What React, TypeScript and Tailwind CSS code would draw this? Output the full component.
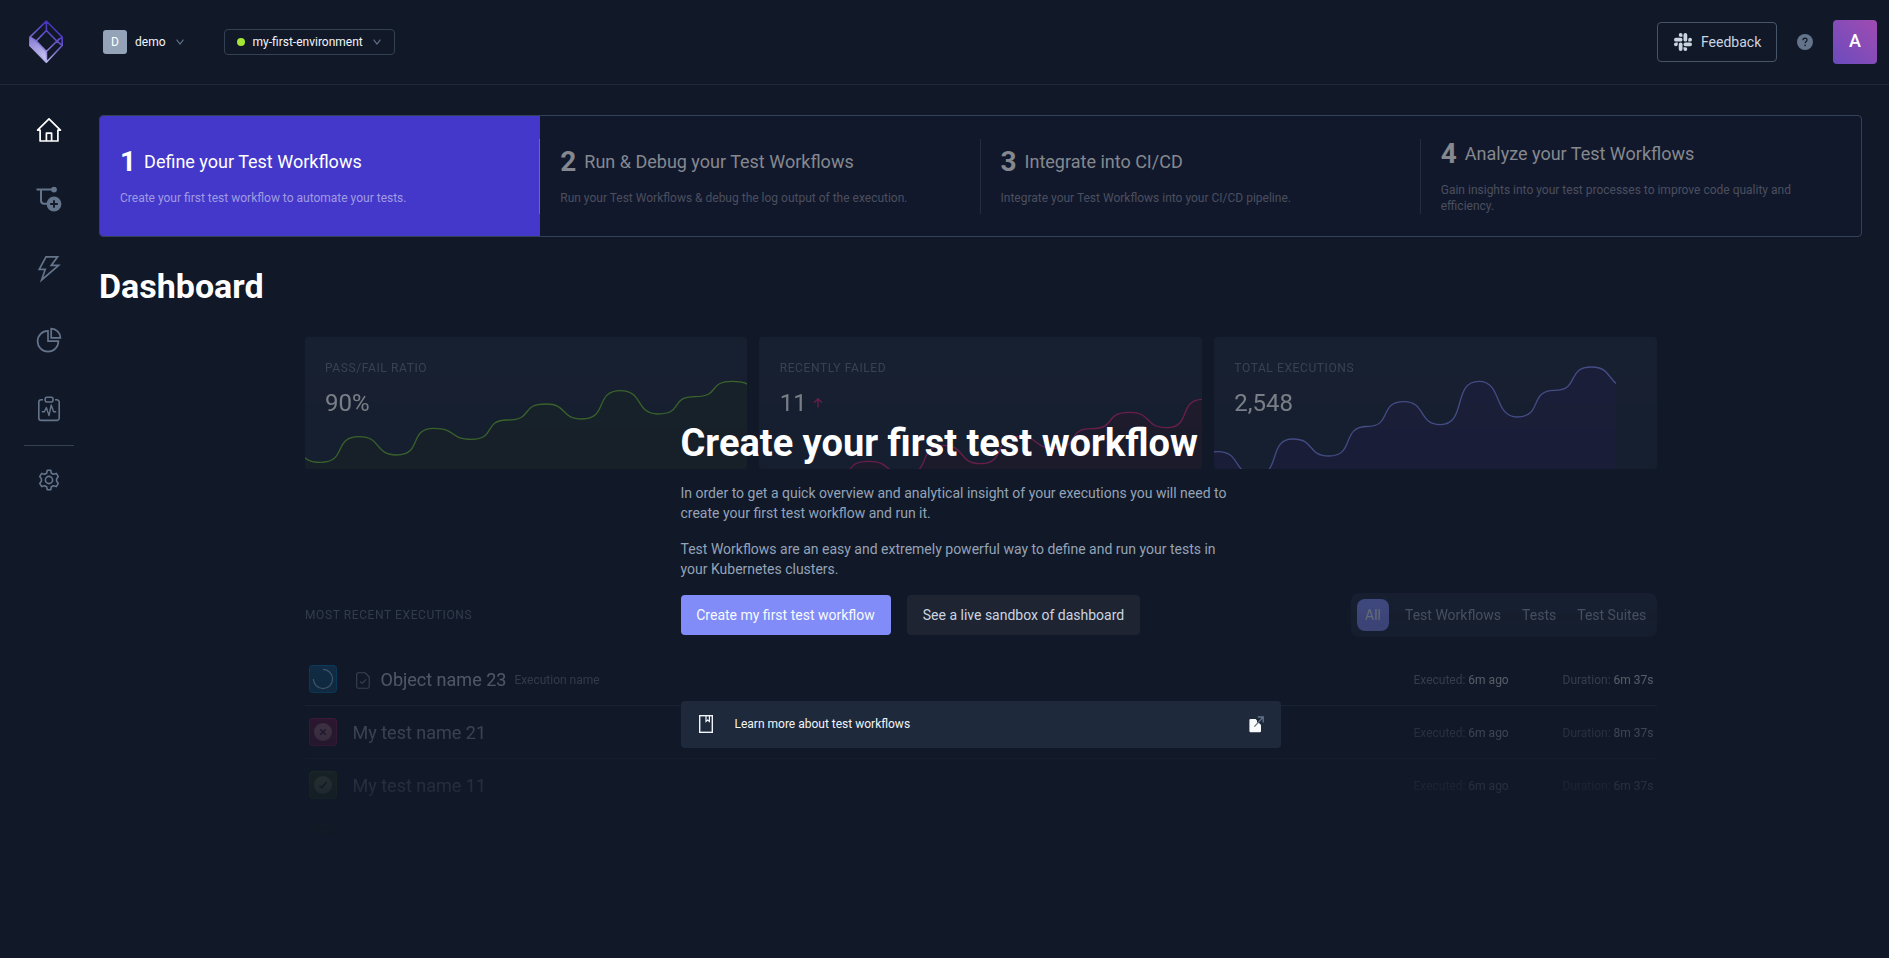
import React from "react";

type Point = [number, number];

/** Builds a wavy line in which every point is flat and neighbours join in an S, steeper on the way up. */
function wave(points: Point[]): string {
  let d = `M${points[0][0]} ${points[0][1]}`;
  for (let i = 1; i < points.length; i++) {
    const [x0, y0] = points[i - 1];
    const [x1, y1] = points[i];
    const h = (x1 - x0) * (y1 < y0 ? 0.7 : 0.61);
    d += ` C${x0 + h} ${y0} ${x1 - h} ${y1} ${x1} ${y1}`;
  }
  return d;
}

function Logo() {
  return (
    <svg width="36" height="44" viewBox="0 0 36 44" fill="none">
      <defs>
        <linearGradient id="logo-line" x1="8" y1="40" x2="26" y2="10" gradientUnits="userSpaceOnUse">
          <stop stopColor="#c4c2ee" />
          <stop offset="0.5" stopColor="#7c6bd0" />
          <stop offset="1" stopColor="#4a35c0" />
        </linearGradient>
        <linearGradient id="logo-face" x1="5" y1="20" x2="14" y2="40" gradientUnits="userSpaceOnUse">
          <stop stopColor="#8f86d8" />
          <stop offset="1" stopColor="#c9c7ef" />
        </linearGradient>
      </defs>
      <path d="M0.6 17 L7.5 21 L17.5 31.5 V43 L0.6 26 Z" fill="url(#logo-face)" />
      <path
        d="M17.4 1.2 L33.2 17 V25.5 L17.4 42.2 L1 25.5 V17 Z M17.4 1.2 V10.5 L7.2 21 L17.4 31.5 L30.5 18.5 M33.2 25.5 L28 21.2 L17.4 10.5 M28 21.2 L33.2 17 M1 17 L7.2 21 M17.4 31.5 V42"
        stroke="url(#logo-line)"
        strokeWidth="1.6"
        strokeLinejoin="round"
      />
    </svg>
  );
}

function Chevron() {
  return (
    <svg width="8" height="6" viewBox="0 0 8 6" fill="none" stroke="#64748b" strokeWidth="1.1">
      <path d="M0.6 0.6 L4 5 L7.4 0.6" />
    </svg>
  );
}

function SlackIcon() {
  return (
    <svg width="18" height="18" viewBox="0 0 24 24" fill="#cbd5e1">
      <path d="M5.042 15.165a2.528 2.528 0 0 1-2.52 2.523A2.528 2.528 0 0 1 0 15.165a2.527 2.527 0 0 1 2.522-2.52h2.52v2.52zM6.313 15.165a2.527 2.527 0 0 1 2.521-2.52 2.527 2.527 0 0 1 2.521 2.52v6.313A2.528 2.528 0 0 1 8.834 24a2.528 2.528 0 0 1-2.521-2.522v-6.313zM8.834 5.042a2.528 2.528 0 0 1-2.521-2.52A2.528 2.528 0 0 1 8.834 0a2.528 2.528 0 0 1 2.521 2.522v2.52H8.834zM8.834 6.313a2.528 2.528 0 0 1 2.521 2.521 2.528 2.528 0 0 1-2.521 2.521H2.522A2.528 2.528 0 0 1 0 8.834a2.528 2.528 0 0 1 2.522-2.521h6.312zM18.956 8.834a2.528 2.528 0 0 1 2.522-2.521A2.528 2.528 0 0 1 24 8.834a2.528 2.528 0 0 1-2.522 2.521h-2.522V8.834zM17.688 8.834a2.528 2.528 0 0 1-2.523 2.521 2.527 2.527 0 0 1-2.52-2.521V2.522A2.527 2.527 0 0 1 15.165 0a2.528 2.528 0 0 1 2.523 2.522v6.312zM15.165 18.956a2.528 2.528 0 0 1 2.523 2.522A2.528 2.528 0 0 1 15.165 24a2.527 2.527 0 0 1-2.52-2.522v-2.522h2.52zM15.165 17.688a2.527 2.527 0 0 1-2.52-2.523 2.526 2.526 0 0 1 2.52-2.52h6.313A2.527 2.527 0 0 1 24 15.165a2.528 2.528 0 0 1-2.522 2.523h-6.313z" />
    </svg>
  );
}

function HelpIcon() {
  return (
    <svg width="16" height="16" viewBox="0 0 16 16" fill="none">
      <circle cx="8" cy="8" r="8" fill="#64748b" />
      <path
        d="M5.9 6.3 C5.9 4.9 6.8 4.1 8 4.1 C9.2 4.1 10.1 4.9 10.1 6 C10.1 7.5 8.1 7.6 8.1 9.3"
        stroke="#111827"
        strokeWidth="1.2"
      />
      <circle cx="8.1" cy="11.4" r="0.8" fill="#111827" />
    </svg>
  );
}

function HomeIcon() {
  return (
    <svg width="26" height="26" viewBox="0 0 26 26" fill="none" stroke="#fff" strokeWidth="1.7" strokeLinejoin="round">
      <path d="M13 1.8 L1.6 13.2 H4.1 V24 H21.9 V13.2 H24.4 Z" />
      <path d="M10.4 24 V16.2 H15.6 V24" />
    </svg>
  );
}

function WorkflowIcon() {
  return (
    <svg width="26" height="26" viewBox="0 0 26 26" fill="none" stroke="#64748b" strokeWidth="2">
      <path d="M0.5 3.6 H18 M5 3.6 V14.4 C5 16.8 6 17.8 8.4 17.8 H12" />
      <circle cx="18" cy="3.6" r="2.9" fill="#64748b" stroke="none" />
      <circle cx="18" cy="18" r="7.4" fill="#64748b" stroke="none" />
      <path d="M18 14.2 V21.8 M14.2 18 H21.8" stroke="#111827" strokeWidth="1.9" />
    </svg>
  );
}

function BoltIcon() {
  return (
    <svg width="26" height="28" viewBox="0 0 26 28" fill="none" stroke="#64748b" strokeWidth="1.7" strokeLinejoin="miter">
      <path d="M10 1.8 H21.6 L15.2 10.4 H22.6 L5.6 25 L9.2 14.4 H3.2 Z" />
    </svg>
  );
}

function PieIcon() {
  return (
    <svg width="26" height="26" viewBox="0 0 26 26" fill="none" stroke="#64748b" strokeWidth="1.7">
      <path d="M12 3.8 A10.4 10.4 0 1 0 22.4 14.2 H12 Z" />
      <path d="M15.2 1.6 A9.4 9.4 0 0 1 24.4 10.8 H15.2 Z" />
    </svg>
  );
}

function ClipboardIcon() {
  return (
    <svg width="24" height="26" viewBox="0 0 24 26" fill="none" stroke="#64748b" strokeWidth="1.6" strokeLinejoin="round">
      <path d="M6 3.8 H4.2 A2.4 2.4 0 0 0 1.8 6.2 V22 A2.4 2.4 0 0 0 4.2 24.4 H19.8 A2.4 2.4 0 0 0 22.2 22 V6.2 A2.4 2.4 0 0 0 19.8 3.8 H18" />
      <rect x="8.2" y="1.2" width="7.8" height="4.8" rx="1.6" />
      <path d="M4.8 15.8 H7.4 L9.4 11.6 L12 19.6 L14.2 9 L16.6 15.8 H19.2" strokeWidth="1.4" />
    </svg>
  );
}

function GearIcon() {
  return (
    <svg width="24" height="24" viewBox="0 0 24 24" fill="none" stroke="#64748b" strokeWidth="1.6" strokeLinejoin="round">
      <path d="M10.3 2.2 H13.7 L14.4 5.2 L16.4 6.3 L19.3 5.4 L21.3 8.6 L19.6 10.8 V13.2 L21.3 15.4 L19.3 18.6 L16.4 17.7 L14.4 18.8 L13.7 21.8 H10.3 L9.6 18.8 L7.6 17.7 L4.7 18.6 L2.7 15.4 L4.4 13.2 V10.8 L2.7 8.6 L4.7 5.4 L7.6 6.3 L9.6 5.2 Z" />
      <circle cx="12" cy="12" r="3.6" />
    </svg>
  );
}

const steps = [
  { n: 1, title: "Define your Test Workflows", text: "Create your first test workflow to automate your tests." },
  { n: 2, title: "Run & Debug your Test Workflows", text: "Run your Test Workflows & debug the log output of the execution." },
  { n: 3, title: "Integrate into CI/CD", text: "Integrate your Test Workflows into your CI/CD pipeline." },
  { n: 4, title: "Analyze your Test Workflows", text: "Gain insights into your test processes to improve code quality and efficiency." },
];

interface Metric {
  label: string;
  value: string;
  rising?: boolean;
  stroke: string;
  fill: string;
  width: number;
  points: Point[];
}

const metrics: Metric[] = [
  {
    label: "PASS/FAIL RATIO",
    value: "90%",
    stroke: "#6abe30",
    fill: "#202c2d",
    width: 443,
    points: [[-22, 111], [15.7, 125.3], [54.3, 99.7], [91.7, 118], [129, 91.3], [166.7, 102.3], [202.5, 83], [241, 67], [277, 82], [315.7, 53.7], [353, 77], [390, 59.7], [427.7, 44.3], [466, 56]],
  },
  {
    label: "RECENTLY FAILED",
    value: "11",
    rising: true,
    stroke: "#db2777",
    fill: "#2c2034",
    width: 443,
    points: [[72, 140], [110, 124.3], [147, 137], [184, 108.3], [221.7, 126.7], [259.3, 99.7], [296, 111.3], [332, 91.7], [370.7, 75.3], [407.7, 90.7], [444, 62.3]],
  },
  {
    label: "TOTAL EXECUTIONS",
    value: "2,548",
    stroke: "#818cf8",
    fill: "#25254d",
    width: 402,
    points: [[-10, 115], [4, 114.7], [42, 138], [79, 102], [115, 119], [153, 89.5], [190, 64.7], [226.3, 87.7], [265, 44.3], [303, 80], [340.5, 53.3], [377.5, 30], [415, 50]],
  },
];

function MetricCard({ label, value, rising, stroke, fill, width, points }: Metric) {
  const line = wave(points);
  const lastX = points[points.length - 1][0];
  return (
    <div className="relative h-[132px] flex-1 overflow-hidden rounded bg-[#1e293b] px-5 pt-[23px]">
      <svg className="absolute top-0 left-0" width={width} height="132" fill="none">
        <path d={`${line} L${lastX} 180 L${points[0][0]} 180 Z`} fill={fill} />
        <path d={line} stroke={stroke} strokeWidth="1.3" />
      </svg>
      <div className="relative pl-[0.5px] text-xs leading-4 tracking-[0.6px] text-[#64748b]">{label}</div>
      <div className="relative mt-[15px] flex items-center gap-1.5 pl-[0.5px] text-2xl leading-6 text-[#f8fafc]">
        {value}
        {rising && (
          <svg width="10" height="10" viewBox="0 0 10 10" fill="none" stroke="#db2777" strokeWidth="1.2">
            <path d="M5 9.6 V1 M1 4.8 L5 0.9 L9 4.8" />
          </svg>
        )}
      </div>
    </div>
  );
}

function RunningBadge() {
  return (
    <svg width="28" height="28" viewBox="0 0 28 28" fill="none">
      <rect x="0.5" y="0.5" width="27" height="27" rx="3" fill="#0f5480" stroke="#0284c7" />
      <path d="M14 4.4 A9.6 9.6 0 1 1 4.4 14" stroke="#a5dcf7" strokeWidth="1.2" />
    </svg>
  );
}

function FailedBadge() {
  return (
    <svg width="28" height="28" viewBox="0 0 28 28" fill="none">
      <rect x="0.5" y="0.5" width="27" height="27" rx="3" fill="#85184f" stroke="#cf1f6c" />
      <circle cx="14" cy="14" r="9" fill="#e08aaa" />
      <path d="M11.2 11.2 L16.8 16.8 M16.8 11.2 L11.2 16.8" stroke="#4a1238" strokeWidth="1.4" />
    </svg>
  );
}

function PassedBadge() {
  return (
    <svg width="28" height="28" viewBox="0 0 28 28" fill="none">
      <rect x="0.5" y="0.5" width="27" height="27" rx="3" fill="#3f661c" stroke="#5c8f14" />
      <circle cx="14" cy="14" r="9" fill="#b4d47c" />
      <path d="M10.4 14.4 L13 16.8 L17.6 11" stroke="#14240f" strokeWidth="1.4" />
    </svg>
  );
}

function FileCheckIcon() {
  return (
    <svg width="14" height="17" viewBox="0 0 14 17" fill="none" stroke="#94a3b8" strokeWidth="1.1" strokeLinejoin="round">
      <path d="M2.5 0.7 H9 L13.2 5 V14.4 A1.8 1.8 0 0 1 11.4 16.2 H2.5 A1.8 1.8 0 0 1 0.7 14.4 V2.5 A1.8 1.8 0 0 1 2.5 0.7 Z" />
      <path d="M4 9.4 L6.2 11.4 L10 7.4" />
    </svg>
  );
}

const executions = [
  { badge: <RunningBadge />, name: "Object name 23", execution: "Execution name", duration: "6m 37s" },
  { badge: <FailedBadge />, name: "My test name 21", duration: "8m 37s" },
  { badge: <PassedBadge />, name: "My test name 11", duration: "6m 37s" },
];

function Preview() {
  return (
    <div className="h-[498px] w-[1352px] overflow-hidden [mask-image:linear-gradient(to_bottom,rgba(0,0,0,0.46)_0px,rgba(0,0,0,0.42)_260px,rgba(0,0,0,0.30)_345px,rgba(0,0,0,0.195)_397px,rgba(0,0,0,0.1)_449px,transparent_500px)]">
      <div className="flex gap-3">
        {metrics.map((m) => (
          <MetricCard key={m.label} {...m} />
        ))}
      </div>
      <div className="mt-[124px] flex h-11 items-center justify-between">
        <div className="pl-[0.5px] text-xs tracking-[0.6px] text-[#64748b]">MOST RECENT EXECUTIONS</div>
        <div className="flex h-11 w-[306px] items-center rounded-lg bg-[#1e293b] pl-1.5 text-sm text-[#94a3b8]">
          <span className="flex size-8 items-center justify-center rounded-lg bg-[#818cf8] pl-px text-[#e2e8f0]">All</span>
          <span className="ml-[16.5px]">Test Workflows</span>
          <span className="ml-[21px]">Tests</span>
          <span className="ml-[21px]">Test Suites</span>
        </div>
      </div>
      <div className="mt-[16px]">
        {executions.map((e) => (
          <div key={e.name} className="flex h-[53px] items-center border-b border-[#334155] pr-1 pl-1">
            {e.badge}
            <div className="ml-4 flex flex-1 items-center pt-0.5">
              {e.execution && (
                <span className="mr-[11px] ml-[3px]">
                  <FileCheckIcon />
                </span>
              )}
              <span className="text-lg text-[#e2e8f0]">{e.name}</span>
              {e.execution && <span className="ml-2 text-xs text-[#7c8ba3]">{e.execution}</span>}
            </div>
            <div className="w-[149px] pt-0.5 text-xs whitespace-nowrap text-[#8492a8]">
              Executed: <span className="text-[#f1f5f9]">6m ago</span>
            </div>
            <div className="w-[90px] pt-0.5 text-xs whitespace-nowrap text-[#8492a8]">
              Duration: <span className="text-[#f1f5f9]">{e.duration}</span>
            </div>
          </div>
        ))}
        <div className="flex h-[53px] items-center pl-1">
          <PassedBadge />
        </div>
      </div>
    </div>
  );
}

function Hero() {
  return (
    <div className="w-[600px]">
      <h2 className="text-[38px] leading-[48px] font-bold text-white">Create your first test workflow</h2>
      <p className="mt-4 w-[560px] text-sm leading-5 text-[#94a3b8]">
        In order to get a quick overview and analytical insight of your executions you will need to create your first
        test workflow and run it.
      </p>
      <p className="mt-4 w-[560px] text-sm leading-5 text-[#94a3b8]">
        Test Workflows are an easy and extremely powerful way to define and run your tests in your Kubernetes clusters.
      </p>
      <div className="mt-4 flex gap-4">
        <button className="h-10 w-[210px] rounded bg-[#818cf8] text-sm text-[#f8fafc]">Create my first test workflow</button>
        <button className="h-10 w-[233px] rounded bg-[#1e2431] pl-px text-sm text-[#cbd5e1]">See a live sandbox of dashboard</button>
      </div>
      <div className="mt-[66px] flex h-[47px] items-center rounded bg-[#1e293b] pr-[17px] pb-px pl-[18px]">
        <svg width="14" height="18" viewBox="0 0 14 18" fill="none" stroke="#f1f5f9" strokeWidth="1.4">
          <rect x="0.7" y="0.7" width="12.6" height="16.6" />
          <path d="M7 1 V6.4 L8.7 5 L10.4 6.4 V1" strokeWidth="1.2" />
        </svg>
        <span className="ml-[22px] flex-1 text-xs text-[#f1f5f9]">Learn more about test workflows</span>
        <svg width="16" height="17" viewBox="0 0 16 17" fill="none">
          <path d="M2.6 3 H7.6 L9 4.4 V6.6 L11.6 7.6 L13 9 V15 A1.2 1.2 0 0 1 11.8 16.2 H2.6 A1.2 1.2 0 0 1 1.4 15 V4.2 A1.2 1.2 0 0 1 2.6 3 Z" fill="#f8fafc" />
          <path d="M6.4 10.6 L14.6 1.6 M9.8 1 H15.2 V6.4" stroke="#64748b" strokeWidth="1.3" />
        </svg>
      </div>
    </div>
  );
}

export default function App() {
  return (
    <div className="flex h-[958px] w-[1889px] flex-col overflow-hidden bg-[#111827] font-['Roboto',sans-serif] text-white">
      <header className="flex h-[85px] shrink-0 items-center border-b border-[#1e293b] pr-3 pl-[29px]">
        <Logo />
        <div className="ml-[38px] flex items-center">
          <span className="flex size-6 items-center justify-center rounded-[3px] bg-[#94a3b8] text-xs">D</span>
          <span className="mr-[10px] ml-2 text-xs text-[#f1f5f9]">demo</span>
          <Chevron />
        </div>
        <div className="ml-10 flex h-[26px] w-[171px] items-center rounded border border-[#334155] pl-3">
          <span className="size-2 rounded-full bg-[#a3e635]" />
          <span className="mr-[10px] ml-2 text-xs text-[#f1f5f9]">my-first-environment</span>
          <Chevron />
        </div>
        <div className="ml-auto flex items-center">
          <button className="flex h-10 w-[120px] items-center rounded border border-[#475569] pl-4 text-sm text-[#cbd5e1]">
            <SlackIcon />
            <span className="ml-[9px]">Feedback</span>
          </button>
          <span className="ml-5">
            <HelpIcon />
          </span>
          <span className="ml-5 flex size-11 items-center justify-center rounded bg-linear-to-tr from-[#6a4bbd] to-[#a04ab2] pb-0.5 text-lg font-medium">
            A
          </span>
        </div>
      </header>
      <div className="flex min-h-0 flex-1">
        <nav className="flex w-[98px] shrink-0 flex-col items-center">
          <span className="mt-[32px]"><HomeIcon /></span>
          <span className="mt-[43px]"><WorkflowIcon /></span>
          <span className="mt-[43px]"><BoltIcon /></span>
          <span className="mt-[44px]"><PieIcon /></span>
          <span className="mt-[43px]"><ClipboardIcon /></span>
          <span className="mt-[23px] h-px w-[50px] bg-[#334155]" />
          <span className="mt-[22px]"><GearIcon /></span>
        </nav>
        <main className="ml-px flex w-[1763px] flex-col pt-[30px]">
          <section className="flex h-[122px] shrink-0 overflow-hidden rounded border border-[#334155] bg-[#12182b]">
            {steps.map((s) => (
              <div
                key={s.n}
                className={
                  s.n === 1
                    ? "flex flex-1 items-center bg-[#4338ca]"
                    : "flex flex-1 items-center"
                }
              >
                <div className="flex-1 px-5">
                  <div className={s.n === 1 ? "flex items-center text-white" : "flex items-center text-[#85888f]"}>
                    <span className="mr-2 text-[28px] leading-8 font-bold">{s.n}</span>
                    <span className="text-lg leading-8">{s.title}</span>
                  </div>
                  <p className={s.n === 1 ? "mt-3 text-xs leading-4 text-[#a19be4]" : "mt-3 text-xs leading-4 text-[#4a4f5f]"}>{s.text}</p>
                </div>
                {s.n < 4 && <span className={s.n === 1 ? "h-[75px] w-px bg-[#6a62d5]" : "h-[75px] w-px bg-[#272c3c]"} />}
              </div>
            ))}
          </section>
          <h1 className="mt-[29px] text-[34px] leading-10 font-bold">Dashboard</h1>
          <section className="mt-[31px] grid justify-items-center">
            <div className="col-start-1 row-start-1">
              <Preview />
            </div>
            <div className="z-10 col-start-1 row-start-1 pt-[82px]">
              <Hero />
            </div>
          </section>
        </main>
      </div>
    </div>
  );
}
